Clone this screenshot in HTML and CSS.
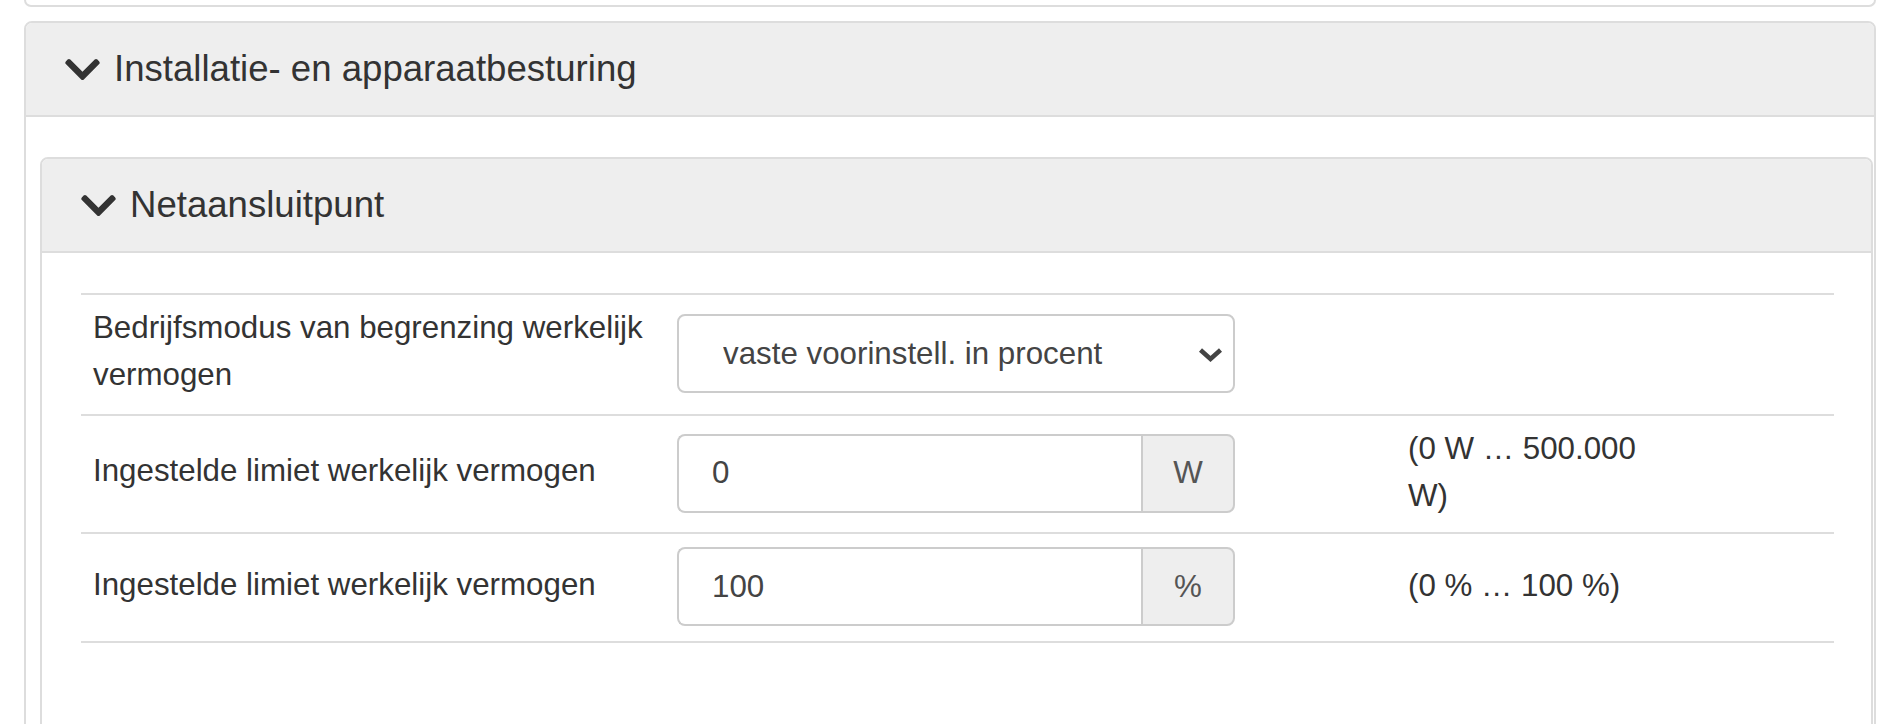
FILE: index.html
```html
<!DOCTYPE html>
<html>
<head>
  <meta charset="UTF-8">
  <title>Netaansluitpunt</title>
  <link rel="stylesheet" href="styles.css">
</head>
<body>
  <div class="page">
    <div class="panel panel-stub"></div>

    <div class="panel">
      <div class="panel-heading">
        <svg class="chevron" viewBox="5 123 438 266"><path d="M207.029 381.476L12.686 187.132c-9.373-9.373-9.373-24.569 0-33.941l22.667-22.667c9.357-9.357 24.522-9.375 33.901-.04L224 284.505l154.745-154.021c9.379-9.335 24.544-9.317 33.901.04l22.667 22.667c9.373 9.373 9.373 24.569 0 33.941L240.971 381.476c-9.373 9.372-24.569 9.372-33.942 0z"/></svg>
        <h2 class="panel-title">Installatie- en apparaatbesturing</h2>
      </div>

      <div class="panel-body outer-body">
        <div class="panel">
          <div class="panel-heading">
            <svg class="chevron" viewBox="5 123 438 266"><path d="M207.029 381.476L12.686 187.132c-9.373-9.373-9.373-24.569 0-33.941l22.667-22.667c9.357-9.357 24.522-9.375 33.901-.04L224 284.505l154.745-154.021c9.379-9.335 24.544-9.317 33.901.04l22.667 22.667c9.373 9.373 9.373 24.569 0 33.941L240.971 381.476c-9.373 9.372-24.569 9.372-33.942 0z"/></svg>
            <h2 class="panel-title">Netaansluitpunt</h2>
          </div>

          <div class="panel-body inner-body">
            <div class="param-table">
              <div class="param-row">
                <div class="param-label">Bedrijfsmodus van begrenzing werkelijk vermogen</div>
                <div class="param-control">
                  <div class="select-wrap">
                    <select class="form-control">
                      <option>vaste voorinstell. in procent</option>
                    </select>
                    <svg class="select-arrow" viewBox="0 0 26 15"><polyline points="3,3 13,12 23,3"/></svg>
                  </div>
                </div>
                <div class="param-range"></div>
                <div></div>
              </div>

              <div class="param-row">
                <div class="param-label">Ingestelde limiet werkelijk vermogen</div>
                <div class="param-control">
                  <div class="input-group">
                    <input class="form-control" type="text" value="0">
                    <span class="input-addon">W</span>
                  </div>
                </div>
                <div class="param-range">(0 W … 500.000 W)</div>
                <div></div>
              </div>

              <div class="param-row">
                <div class="param-label">Ingestelde limiet werkelijk vermogen</div>
                <div class="param-control">
                  <div class="input-group">
                    <input class="form-control" type="text" value="100">
                    <span class="input-addon">%</span>
                  </div>
                </div>
                <div class="param-range">(0 % … 100 %)</div>
                <div></div>
              </div>
            </div>
          </div>
        </div>
      </div>
    </div>
  </div>
</body>
</html>
```

FILE: styles.css
```css
* {
  margin: 0;
  padding: 0;
  box-sizing: border-box;
}

html, body {
  height: 724px;
  overflow: hidden;
}

body {
  font-family: "Liberation Sans", Arial, sans-serif;
  color: #333;
  background: #fff;
}

.page {
  padding: 0 16px 0 24px;
}

/* Panels */
.panel {
  background: #fff;
  border: 2px solid #ddd;
  border-radius: 8px;
  overflow: hidden;
}

.panel-stub {
  height: 7px;
  border-top: none;
  border-radius: 0 0 8px 8px;
  margin-bottom: 14px;
}

.panel-heading {
  display: flex;
  align-items: center;
  gap: 14px;
  height: 94px;
  padding: 1px 39px 0;
  background: #eee;
  border-bottom: 2px solid #ddd;
}

.panel-title {
  font-size: 36.6px;
  font-weight: 400;
  line-height: 1.1;
  color: #333;
}

.chevron {
  flex: none;
  width: 35px;
  height: 21px;
  fill: #333;
}

.outer-body {
  padding: 40px 1px 0 14px;
}

.inner-body {
  padding: 40px 37px 140px 39px;
}

/* Parameter table */
.param-row {
  display: grid;
  grid-template-columns: 584px 731px 274px 1fr;
  align-items: center;
  border-top: 2px solid #ddd;
}

.param-row:last-child {
  border-bottom: 2px solid #ddd;
}

.param-label,
.param-range {
  font-size: 31.3px;
  line-height: 47px;
  padding: 9px 12px 16px;
}

.param-range {
  padding: 9px 12px 13px;
}

.param-control {
  padding: 13px 12px 15px;
}

.form-control {
  display: block;
  width: 558px;
  height: 79px;
  padding: 0 33px;
  font-family: inherit;
  font-size: 31.3px;
  color: #444;
  background: #fff;
  border: 2px solid #ccc;
  border-radius: 8px;
  outline: none;
}

.select-wrap {
  position: relative;
  width: 558px;
}

select.form-control {
  appearance: none;
  -webkit-appearance: none;
  padding-left: 44px;
}

.select-arrow {
  position: absolute;
  right: 11px;
  top: 33px;
  width: 27px;
  height: 15px;
  fill: none;
  stroke: #444;
  stroke-width: 4.5;
  pointer-events: none;
}

.input-group {
  display: flex;
  width: 558px;
}

.input-group .form-control {
  flex: 1;
  width: auto;
  min-width: 0;
  border-right: none;
  border-radius: 8px 0 0 8px;
}

.input-addon {
  display: flex;
  align-items: center;
  justify-content: center;
  width: 94px;
  height: 79px;
  font-size: 31.3px;
  color: #555;
  background: #eee;
  border: 2px solid #ccc;
  border-radius: 0 8px 8px 0;
}
```
